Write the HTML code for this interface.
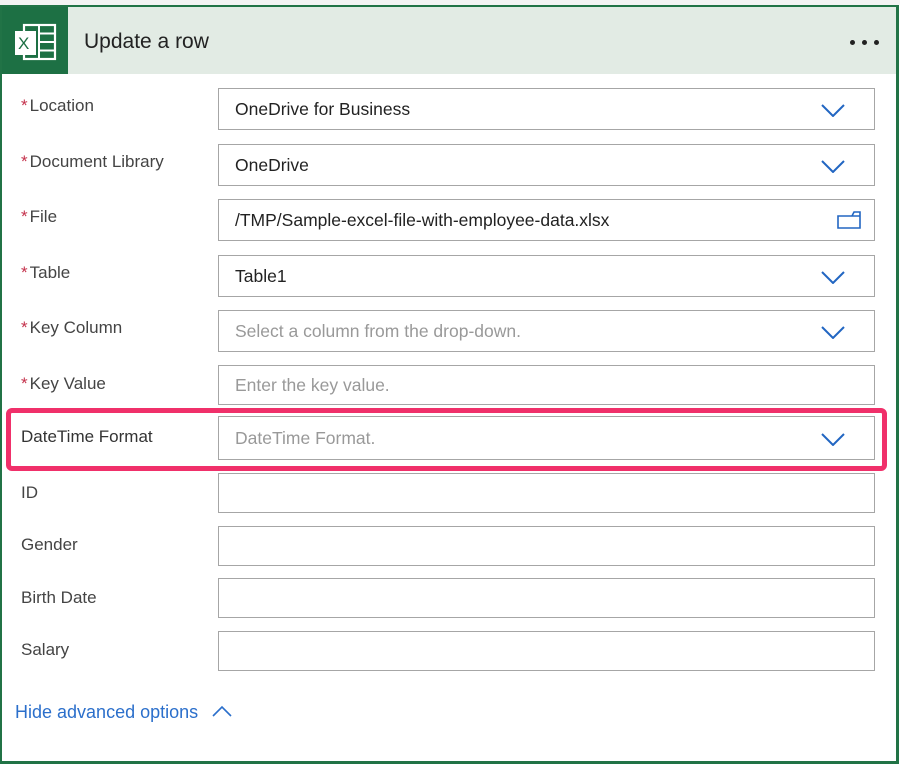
<!DOCTYPE html>
<html><head><style>
body{margin:0;width:900px;height:765px;background:#fff;font-family:"Liberation Sans",sans-serif;position:relative;overflow:hidden}
.card{position:absolute;left:0;top:5px;width:894px;height:754px;border:2px solid #217346;border-right-width:3px;border-bottom-width:3px}
.hdr{position:absolute;left:0;top:0;width:894px;height:67px;background:#e2ebe4}
.ico{position:absolute;left:0;top:0;width:66px;height:67px;background:#1d7044}
.title{position:absolute;left:82px;top:23px;font-size:21px;color:#222}
.dot{position:absolute;top:33px;width:5px;height:5px;border-radius:50%;background:#222}
.lbl{position:absolute;left:21px;font-size:17px;color:#444}
.lbl b{color:#c4314b;font-weight:normal;margin-right:2px}
.in{position:absolute;left:218px;width:657px;border:1px solid #a6a6a6;box-sizing:border-box;font-size:17.5px;color:#222;padding-left:16px;display:flex;align-items:center}
.ph{color:#999}
.chev{position:absolute;right:28px;top:50%;margin-top:-6px}
.pink{position:absolute;left:6px;top:408px;width:871px;height:53px;border:5px solid #f0306a;border-radius:6px}
.link{position:absolute;left:15px;top:702px;font-size:18px;color:#2b6fcb}
</style></head><body>
<div style="position:absolute;left:0;top:0;width:900px;height:5px;background:#f3f3f3"></div>
<div class="card">
<div class="hdr"><div class="ico">
<svg width="66" height="67" viewBox="0 0 66 67"><rect x="22" y="18" width="31" height="34" fill="none" stroke="#fff" stroke-width="2.2"/><path d="M37 18v34M37 26.5h16M37 35h16M37 43.5h16" stroke="#fff" stroke-width="2"/><rect x="13" y="24" width="21" height="24" fill="#fff"/><text x="16" y="42" font-size="17" fill="#1d7044" font-family="Liberation Sans">X</text></svg>
</div><div class="title">Update a row</div>
<div class="dot" style="left:848px"></div><div class="dot" style="left:860px"></div><div class="dot" style="left:872px"></div></div>
</div>
<div class="lbl" style="top:96px"><b>*</b>Location</div>
<div class="lbl" style="top:152px"><b>*</b>Document Library</div>
<div class="lbl" style="top:207px"><b>*</b>File</div>
<div class="lbl" style="top:263px"><b>*</b>Table</div>
<div class="lbl" style="top:318px"><b>*</b>Key Column</div>
<div class="lbl" style="top:374px"><b>*</b>Key Value</div>
<div class="lbl" style="top:427px;color:#333">DateTime Format</div>
<div class="lbl" style="top:483px">ID</div>
<div class="lbl" style="top:535px">Gender</div>
<div class="lbl" style="top:588px">Birth Date</div>
<div class="lbl" style="top:640px">Salary</div>
<svg width="0" height="0" style="position:absolute"><defs><symbol id="cv" viewBox="0 0 26 14"><path d="M2 2l11 11L24 2" fill="none" stroke="#2266c2" stroke-width="2"/></symbol></defs></svg>
<div class="in" style="top:88px;height:42px">OneDrive for Business<svg class="chev" width="26" height="14"><use href="#cv"/></svg></div>
<div class="in" style="top:144px;height:42px">OneDrive<svg class="chev" width="26" height="14"><use href="#cv"/></svg></div>
<div class="in" style="top:199px;height:42px">/TMP/Sample-excel-file-with-employee-data.xlsx<svg style="position:absolute;right:12px;top:10px" width="26" height="20"><path d="M2 6h14l2-4h6v16H2z M16 6h8" fill="none" stroke="#2266c2" stroke-width="1.6"/></svg></div>
<div class="in" style="top:255px;height:42px">Table1<svg class="chev" width="26" height="14"><use href="#cv"/></svg></div>
<div class="in ph" style="top:310px;height:42px">Select a column from the drop-down.<svg class="chev" width="26" height="14"><use href="#cv"/></svg></div>
<div class="in ph" style="top:365px;height:40px">Enter the key value.</div>
<div class="pink"></div>
<div class="in ph" style="top:416px;height:44px">DateTime Format.<svg class="chev" width="26" height="14"><use href="#cv"/></svg></div>
<div class="in" style="top:473px;height:40px"></div>
<div class="in" style="top:526px;height:40px"></div>
<div class="in" style="top:578px;height:40px"></div>
<div class="in" style="top:631px;height:40px"></div>
<div class="link">Hide advanced options <svg width="22" height="14" style="margin-left:8px"><path d="M2 12l9-9 9 9" fill="none" stroke="#2b6fcb" stroke-width="1.6"/></svg></div>
</body></html>
